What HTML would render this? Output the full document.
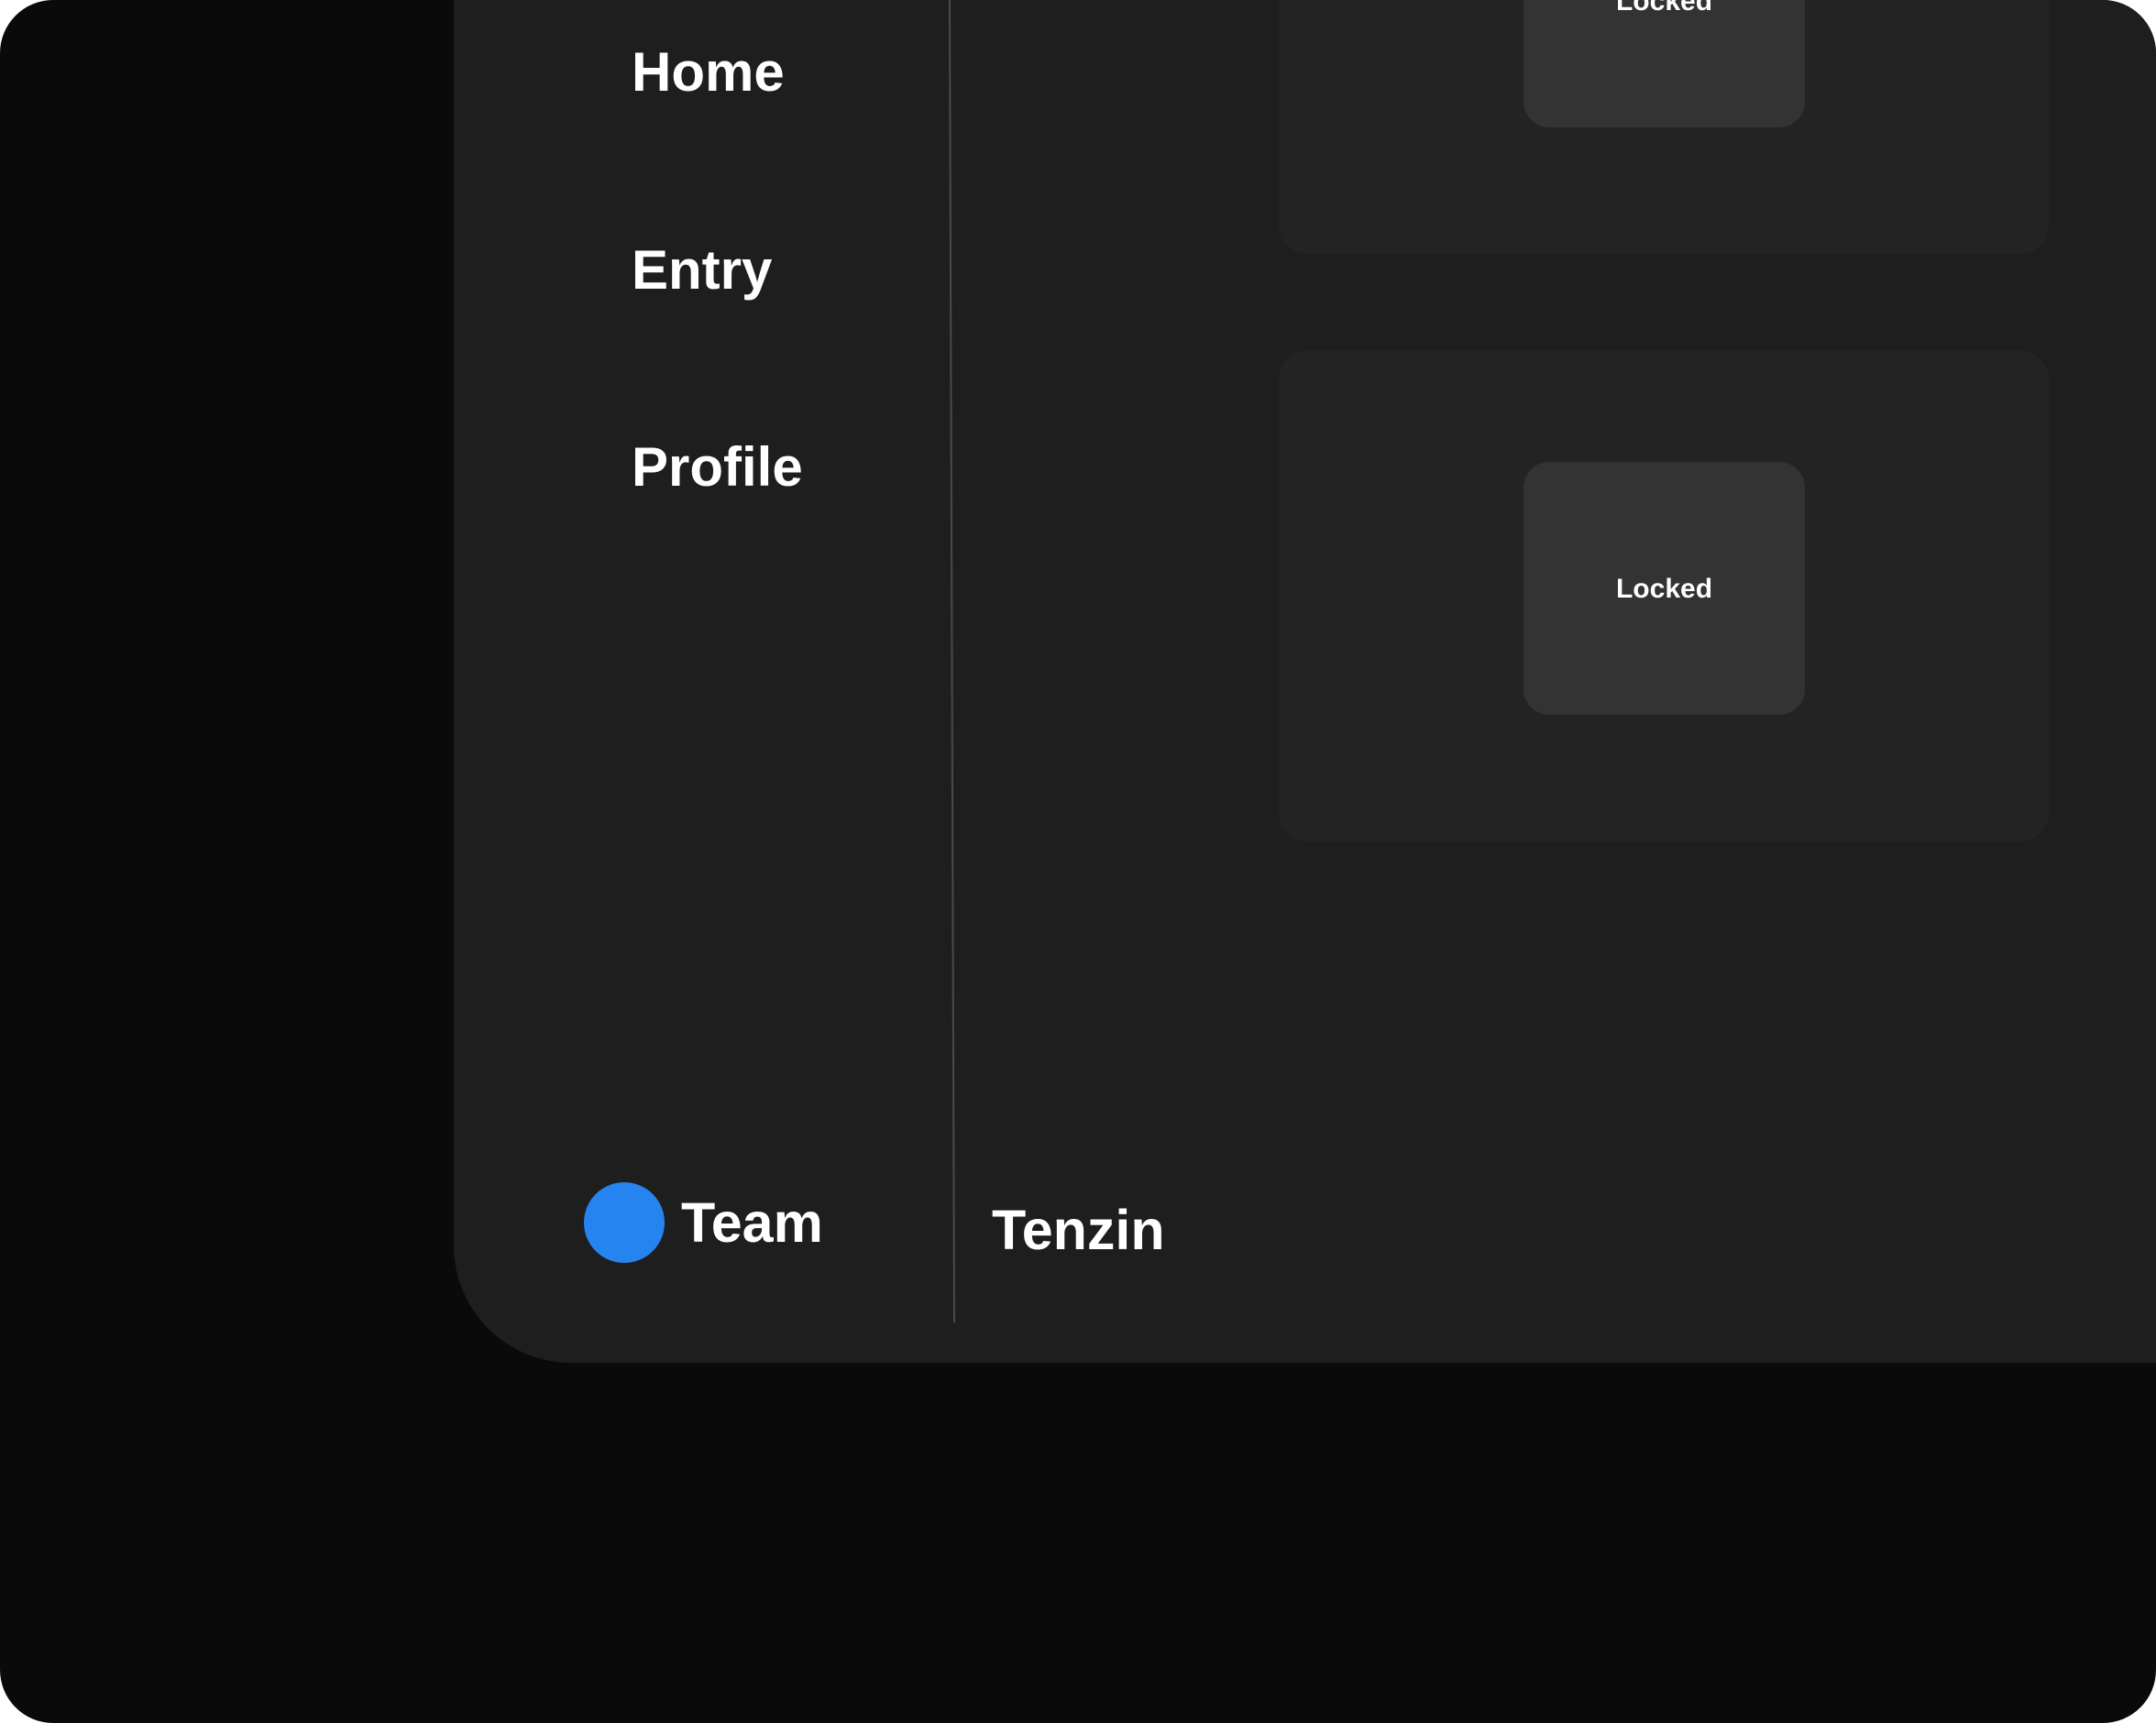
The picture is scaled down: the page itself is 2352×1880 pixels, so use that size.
<!DOCTYPE html>
<html><head><style>
html,body{margin:0;padding:0;background:#fff;}
body{width:2352px;height:1880px;position:relative;overflow:hidden;font-family:"Liberation Sans",sans-serif;}
.outer{position:absolute;left:0;top:0;width:2352px;height:1880px;background:#0a0a0a;border-radius:58px;overflow:hidden;}
.panel{position:absolute;left:495px;top:0;width:1857px;height:1487px;background:#1e1e1e;border-bottom-left-radius:128px;}
.nav{position:absolute;left:689px;color:#fff;font-size:60px;font-weight:bold;line-height:1;}
.card{position:absolute;left:1395px;width:840px;height:535px;background:#232323;border-radius:30px;}
.inner{position:absolute;left:267px;top:121px;width:307px;height:276px;background:#333;border-radius:28px;}
.lk{position:absolute;left:0;right:0;top:139px;transform:translateY(-50%);text-align:center;color:#fff;font-size:30px;font-weight:bold;}
</style></head><body>
<div class="outer">
<div class="panel"></div>
<svg style="position:absolute;left:0;top:0" width="2352" height="1880"><line x1="1036" y1="0" x2="1041" y2="1443" stroke="#4a4a4a" stroke-width="2"/></svg>
<div class="nav" style="top:49px">Home</div>
<div class="nav" style="top:265px">Entry</div>
<div class="nav" style="top:480px">Profile</div>
<div style="position:absolute;left:637px;top:1290px;width:88px;height:88px;border-radius:50%;background:#2684f0"></div>
<div class="nav" style="left:743px;top:1304px;font-size:61px">Team</div>
<div class="nav" style="left:1082px;top:1312px;font-size:61px">Tenzin</div>
<div class="card" style="top:-258px"><div class="inner"><div class="lk">Locked</div></div></div>
<div class="card" style="top:383px"><div class="inner"><div class="lk">Locked</div></div></div>
</div>
</body></html>
